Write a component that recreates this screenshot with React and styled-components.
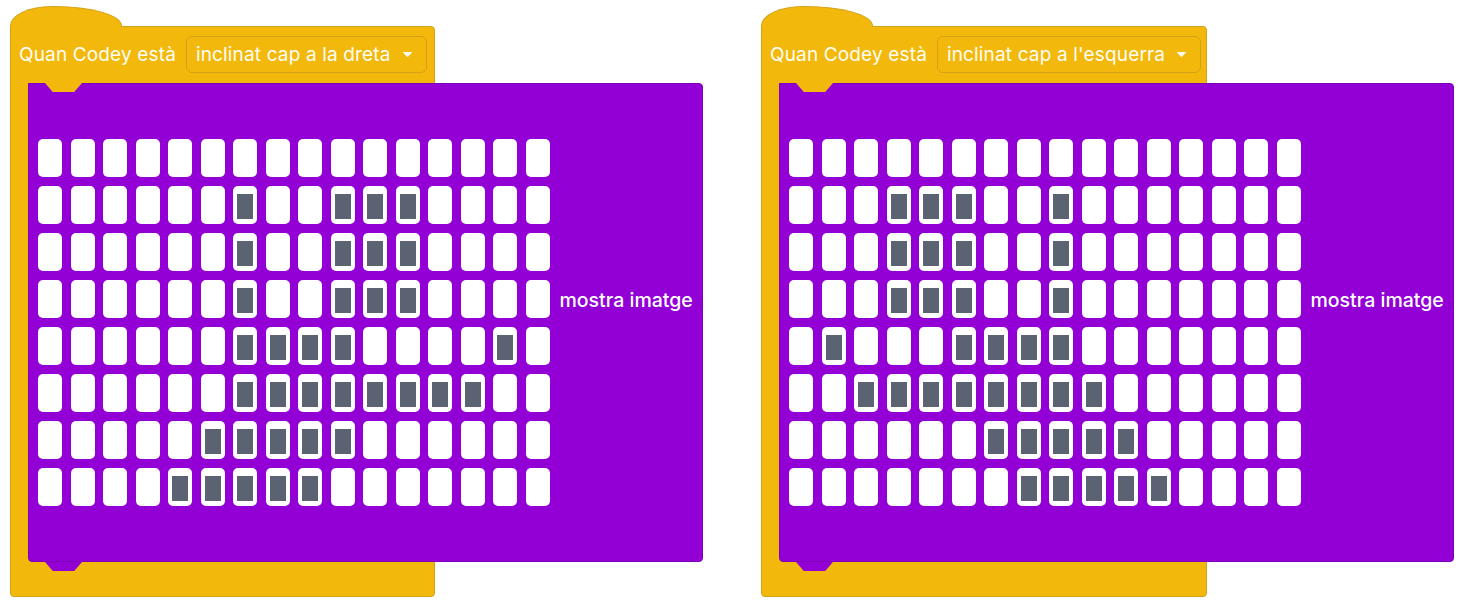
import React from "react";
import styled, { createGlobalStyle } from "styled-components";

const YELLOW = "#f2b90c";
const YELLOW_EDGE = "#d4a21a";
const PURPLE = "#9200d6";
const PURPLE_EDGE = "#7c00b8";

const GlobalStyle = createGlobalStyle`
  html, body {
    margin: 0;
    padding: 0;
    background: #ffffff;
    font-family: Inter, "Noto Sans", sans-serif;
  }
`;

const Page = styled.div`
  display: flex;
  gap: 58px;
  padding: 6px 0 0 10px;
`;

const Block = styled.div`
  display: flex;
  flex-direction: column;
  width: 693px;
`;

const Hump = styled.div`
  position: relative;
  z-index: 1;
  width: 110px;
  height: 20px;
  margin-bottom: -1px;
  background: ${YELLOW};
  border: 1px solid ${YELLOW_EDGE};
  border-bottom: none;
  border-radius: 42px 68px 0 0 / 20px 20px 0 0;
`;

const Body = styled.div`
  box-sizing: border-box;
  width: ${({ $width }) => $width}px;
  height: 571px;
  display: flex;
  flex-direction: column;
  background: ${YELLOW};
  border: 1px solid ${YELLOW_EDGE};
  border-radius: 0 4px 4px 4px;
`;

const Header = styled.div`
  display: flex;
  align-items: center;
  gap: 10px;
  height: 56px;
  box-sizing: border-box;
  padding: 8px 0 9px 8px;
  color: #fffdf4;
  font-size: 19px;
  letter-spacing: 0.15px;
  white-space: nowrap;
`;

const Dropdown = styled.div`
  display: flex;
  align-items: center;
  gap: 11px;
  height: 37px;
  box-sizing: border-box;
  padding: 0 13px 0 9px;
  border: 1px solid ${YELLOW_EDGE};
  border-radius: 6px;
`;

const Caret = () => (
  <svg width="11" height="7" viewBox="0 0 11 7">
    <path d="M1.5 1 H9.5 Q10.5 1 9.8 1.8 L6.2 5.6 Q5.5 6.3 4.8 5.6 L1.2 1.8 Q0.5 1 1.5 1 Z" fill="#fffdf4" />
  </svg>
);

const Stack = styled.div`
  display: flex;
  padding-left: 17px;
`;

const Panel = styled.div`
  position: relative;
  flex-shrink: 0;
  box-sizing: border-box;
  width: 675px;
  height: 479px;
  display: flex;
  align-items: center;
  gap: 10px;
  padding-left: 9px;
  background: ${PURPLE};
  border: 1px solid ${PURPLE_EDGE};
  border-radius: 0 4px 4px 4px;

  &::before,
  &::after {
    content: "";
    position: absolute;
    left: 16px;
    width: 37px;
    height: 9px;
    clip-path: polygon(0 0, 100% 0, 79% 100%, 21% 100%);
  }

  &::before {
    top: -1px;
    background: ${YELLOW};
  }

  &::after {
    bottom: -10px;
    background: ${PURPLE};
  }
`;

const Grid = styled.div`
  display: grid;
  grid-template-columns: repeat(16, 24px);
  column-gap: 8.5px;
  row-gap: 9px;
`;

const Cell = styled.div`
  width: 24px;
  height: 38px;
  display: flex;
  align-items: center;
  justify-content: center;
  background: #ffffff;
  border-radius: 5px;

  &::after {
    content: "";
    display: ${({ $on }) => ($on ? "block" : "none")};
    width: 16px;
    height: 25px;
    margin-top: 2px;
    background: #5b6272;
  }
`;

const Label = styled.span`
  margin-bottom: 46px;
  color: #ffffff;
  font-size: 19.5px;
  font-weight: 500;
  white-space: nowrap;
`;

const Footer = styled.div`
  flex: 1;
`;

const blocks = [
  {
    width: 425,
    option: "inclinat cap a la dreta",
    lit: [
      [],
      [6, 9, 10, 11],
      [6, 9, 10, 11],
      [6, 9, 10, 11],
      [6, 7, 8, 9, 14],
      [6, 7, 8, 9, 10, 11, 12, 13],
      [5, 6, 7, 8, 9],
      [4, 5, 6, 7, 8],
    ],
  },
  {
    width: 446,
    option: "inclinat cap a l'esquerra",
    lit: [
      [],
      [3, 4, 5, 8],
      [3, 4, 5, 8],
      [3, 4, 5, 8],
      [1, 5, 6, 7, 8],
      [2, 3, 4, 5, 6, 7, 8, 9],
      [6, 7, 8, 9, 10],
      [7, 8, 9, 10, 11],
    ],
  },
];

function LedGrid({ lit }) {
  return (
    <Grid>
      {lit.map((row, r) =>
        Array.from({ length: 16 }, (_, c) => (
          <Cell key={`${r}-${c}`} $on={row.includes(c)} />
        ))
      )}
    </Grid>
  );
}

export default function App() {
  return (
    <>
      <GlobalStyle />
      <Page>
        {blocks.map(({ width, option, lit }) => (
          <Block key={option}>
            <Hump />
            <Body $width={width}>
              <Header>
                Quan Codey està
                <Dropdown>
                  {option}
                  <Caret />
                </Dropdown>
              </Header>
              <Stack>
                <Panel>
                  <LedGrid lit={lit} />
                  <Label>mostra imatge</Label>
                </Panel>
              </Stack>
              <Footer />
            </Body>
          </Block>
        ))}
      </Page>
    </>
  );
}
